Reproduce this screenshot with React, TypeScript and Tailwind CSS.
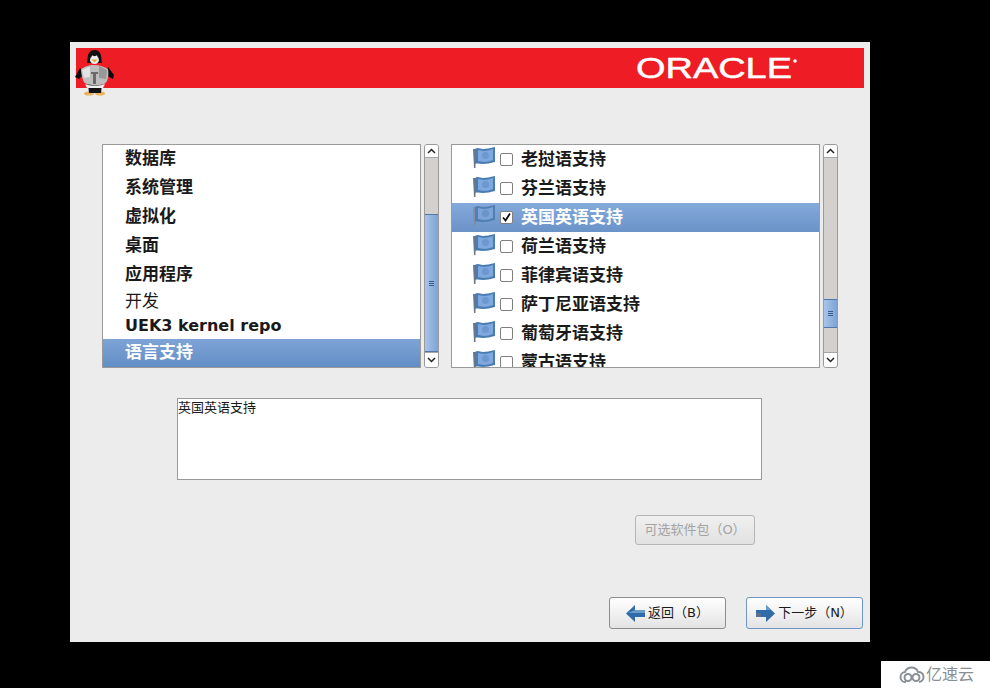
const cjk = "font-['DejaVu_Sans','Noto_Sans_CJK_SC',sans-serif]";

const Penguin = () => (
  <svg width="42" height="50" viewBox="0 0 42 50" className="absolute left-[4px] top-[6px]">
    <ellipse cx="15" cy="45.5" rx="5" ry="2" fill="#e8b45a" />
    <ellipse cx="26" cy="45.5" rx="5" ry="2" fill="#e8b45a" />
    <path d="M14 36h14l-1 9h-12z" fill="#111" />
    <path d="M15 5c2-4 9-4 11 0 2 3 1 7 2 10H13c1-3 0-7 2-10z" fill="#111" />
    <ellipse cx="20.5" cy="12" rx="4.5" ry="4" fill="#eee" />
    <path d="M17.5 11.5h6l-3 3z" fill="#e7a43a" />
    <circle cx="18.5" cy="8.5" r="1" fill="#fff" />
    <circle cx="22.5" cy="8.5" r="1" fill="#fff" />
    <path d="M6 20l-5 9 4 2 6-6zM34 19l6 8-1 4-7-4z" fill="#0c0c0c" />
    <path d="M7 21c4-2 7-4 13-4s10 2 14 4c1 5 0 9-1 12-2 4-6 4-12 4-7 0-11-1-12-5-1-3-2-7-2-11z" fill="#bdbdbd" />
    <path d="M8 22c4-2 6-3 8-3v10l-6 1z" fill="#e2e2e2" />
    <path d="M25 18l8 4-1 9-7-1z" fill="#989898" />
    <path d="M17 24h7v2h-2v10h-3V26h-2z" fill="#6a6a6a" />
    <path d="M11 36c4 2 15 2 20 0l-2 4H13z" fill="#eee" />
  </svg>
);

const OracleLogo = () => (
  <svg width="166" height="26" viewBox="0 0 166 26" className="mr-[62px] overflow-visible">
    <text
      x="0"
      y="23"
      textLength="156"
      lengthAdjust="spacingAndGlyphs"
      fontSize="29"
      fontFamily="Liberation Sans, sans-serif"
      fill="#fff"
      stroke="#fff"
      strokeWidth="0.5"
    >
      ORACLE
    </text>
    <circle cx="159" cy="6" r="1.8" fill="#fff" />
  </svg>
);

const Flag = ({ faded }: { faded?: boolean }) => (
  <svg width="24" height="23" viewBox="0 0 24 23" className="shrink-0 mb-[5px]">
    <path d="M1 3h2.5v19H2z" fill={faded ? "#7f8ea3" : "#6b7785"} />
    <path d="M3 3c3-2 5 0 8 0s7-1 12-2v15c-5 1-8 2-12 2-3 0-5-1-8 0z" fill={faded ? "#4f7fb5" : "#4a7cb4"} />
    <path d="M6 4c2 0 4 1 6 1s6-1 9-2v11c-3 1-6 2-9 2-2 0-4-1-6-1z" fill={faded ? "#7ca4d6" : "#7fa9dc"} />
    <circle cx="13.5" cy="9.5" r="3.5" fill={faded ? "#6a93c8" : "#6c98cf"} />
  </svg>
);

const Checkbox = ({ checked }: { checked?: boolean }) => (
  <span className="w-[13px] h-[13px] shrink-0 bg-white border border-[#7f7f7f] rounded-[2px] flex items-center justify-center">
    {checked && (
      <svg width="11" height="11" viewBox="0 0 11 11">
        <path d="M2 5.5l2.5 3L9 1.5" fill="none" stroke="#111" strokeWidth="1.8" />
      </svg>
    )}
  </span>
);

const Scrollbar = ({ thumbTop, thumbHeight }: { thumbTop: string; thumbHeight: string }) => (
  <div className="w-[15px] h-[224px] flex flex-col bg-[#d4d0cd] border border-[#9a9a9a] rounded-[3px] overflow-hidden">
    <div className="h-[13px] shrink-0 bg-white border-b border-[#a5a5a5] flex items-center justify-center">
      <svg width="9" height="6" viewBox="0 0 9 6">
        <path d="M1 5l3.5-3.5L8 5" fill="none" stroke="#222" strokeWidth="1.5" />
      </svg>
    </div>
    <div className="flex-1 flex flex-col">
      <div className={thumbTop} />
      <div className={`${thumbHeight} bg-gradient-to-r from-[#a9c4e8] to-[#7da3d6] border border-[#4f78ad] flex flex-col items-center justify-center gap-[1px] -mx-[1px]`}>
        <span className="w-[5px] h-px bg-[#345f96]" />
        <span className="w-[5px] h-px bg-[#345f96]" />
        <span className="w-[5px] h-px bg-[#345f96]" />
      </div>
    </div>
    <div className="h-[15px] shrink-0 bg-white border-t border-[#a5a5a5] flex items-center justify-center">
      <svg width="9" height="6" viewBox="0 0 9 6">
        <path d="M1 1l3.5 3.5L8 1" fill="none" stroke="#222" strokeWidth="1.5" />
      </svg>
    </div>
  </div>
);

const groups = [
  { label: "数据库", h: "h-[29px]", size: "text-[17px]" },
  { label: "系统管理", h: "h-[29px]", size: "text-[17px]" },
  { label: "虚拟化", h: "h-[29px]", size: "text-[17px]" },
  { label: "桌面", h: "h-[29px]", size: "text-[17px]" },
  { label: "应用程序", h: "h-[29px]", size: "text-[17px]" },
  { label: "开发", h: "h-[25px]", size: "text-[17px]", thin: true },
  { label: "UEK3 kernel repo", h: "h-[24px]", size: "text-[16px]" },
  { label: "语言支持", h: "h-[29px]", size: "text-[17px]", selected: true },
];

const languages = [
  { label: "老挝语支持" },
  { label: "芬兰语支持" },
  { label: "英国英语支持", selected: true },
  { label: "荷兰语支持" },
  { label: "菲律宾语支持" },
  { label: "萨丁尼亚语支持" },
  { label: "葡萄牙语支持" },
  { label: "蒙古语支持" },
];

const NavButton = ({ children, focused }: { children: React.ReactNode; focused?: boolean }) => (
  <button
    className={`w-[117px] h-[32px] flex items-center justify-center gap-[3px] rounded-[3px] border bg-gradient-to-b from-white to-[#e3e3e3] text-[13px] text-[#1a1a1a] ${
      focused ? "border-[#6f96c8]" : "border-[#8d8d8d]"
    }`}
  >
    {children}
  </button>
);

const App = () => {
  return (
    <div className={`relative w-[990px] h-[688px] bg-black pt-[42px] pl-[70px] overflow-hidden ${cjk}`}>
      <div className="relative w-[800px] h-[600px] bg-[#ececec] p-[6px]">
        <div className="h-[40px] w-[788px] bg-[#ee1c25] flex items-center justify-end">
          <OracleLogo />
        </div>
        <Penguin />

        <div className="flex mt-[56px] ml-[26px]">
          <div className="w-[319px] h-[224px] bg-white border border-[#9a9a9a] overflow-hidden">
            {groups.map((g) => (
              <div
                key={g.label}
                className={`${g.h} ${g.size} flex items-center pl-[22px] pb-[2px] ${g.thin ? "font-normal" : "font-bold"} ${
                  g.selected
                    ? "bg-gradient-to-b from-[#7ea4d7] to-[#618dc4] text-white"
                    : "text-[#1a1a1a]"
                }`}
              >
                {g.label}
              </div>
            ))}
          </div>
          <div className="ml-[3px]">
            <Scrollbar thumbTop="h-[56px]" thumbHeight="h-[138px]" />
          </div>

          <div className="ml-[12px] w-[369px] h-[224px] bg-white border border-[#9a9a9a] overflow-hidden">
            {languages.map((l) => (
              <div
                key={l.label}
                className={`h-[29px] flex items-center pl-[20px] text-[17px] font-bold ${
                  l.selected
                    ? "bg-gradient-to-b from-[#85a9db] to-[#6a93c8] text-white"
                    : "text-[#1a1a1a]"
                }`}
              >
                <Flag faded={l.selected} />
                <span className="ml-[4px] mr-[8px] flex">
                  <Checkbox checked={l.selected} />
                </span>
                <span>{l.label}</span>
              </div>
            ))}
          </div>
          <div className="ml-[3px]">
            <Scrollbar thumbTop="h-[141px]" thumbHeight="h-[29px]" />
          </div>
        </div>

        <div className="mt-[30px] ml-[101px] w-[585px] h-[82px] bg-white border border-[#9a9a9a] text-[13px] leading-[17px] text-[#1a1a1a]">
          英国英语支持
        </div>

        <div className="mt-[35px] ml-[559px]">
          <button className="w-[120px] h-[30px] rounded-[3px] border border-[#b5b5b5] bg-gradient-to-b from-[#f0f0f0] to-[#e2e2e2] text-[13px] text-[#a3a3a3]">
            可选软件包（O）
          </button>
        </div>

        <div className="mt-[52px] mr-[1px] flex justify-end gap-[20px]">
          <NavButton>
            <svg width="19" height="19" viewBox="0 0 19 19">
              <path d="M0 9.5L9 1v5h10v7H9v5z" fill="#2f6ba8" />
              <path d="M9 6h10v3H2z" fill="#6c9ccb" />
            </svg>
            返回（B）
          </NavButton>
          <NavButton focused>
            <svg width="19" height="19" viewBox="0 0 19 19">
              <path d="M19 9.5L10 1v5H0v7h10v5z" fill="#2f6ba8" />
              <path d="M0 6h10V1l5 5z" fill="#6c9ccb" />
              <path d="M0 9h5v4H0z" fill="#5c6f8c" />
            </svg>
            下一步（N）
          </NavButton>
        </div>
      </div>

      <div className="absolute right-0 bottom-0 w-[109px] h-[27px] bg-white flex items-center pl-[18px] gap-[1px] text-[#8a8f94] text-[16px]">
        <svg width="26" height="18" viewBox="0 0 26 18" fill="none" stroke="#8a8f94" strokeWidth="2">
          <path d="M7 16a5 5 0 0 1-1-10 7 7 0 0 1 13 0 5 5 0 0 1 1 10" />
          <circle cx="9" cy="11.5" r="3.5" />
          <circle cx="17" cy="11.5" r="3.5" />
        </svg>
        亿速云
      </div>
    </div>
  );
};

export default App;
